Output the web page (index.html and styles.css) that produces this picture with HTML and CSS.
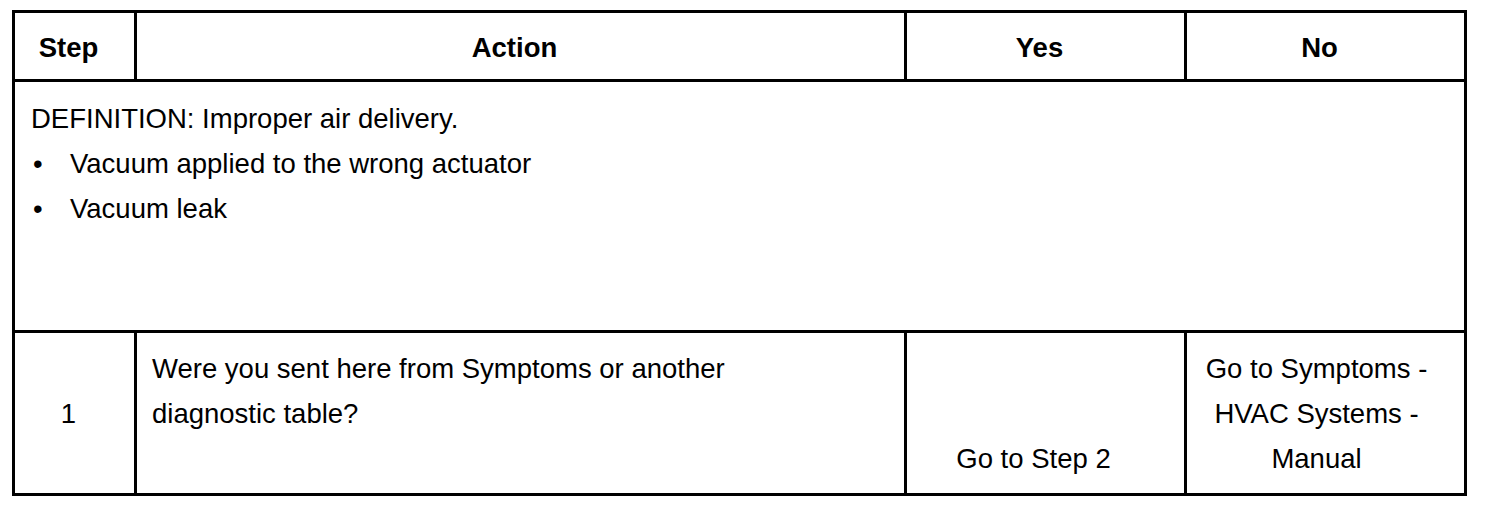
FILE: index.html
```html
<!DOCTYPE html>
<html lang="en">
<head>
<meta charset="utf-8">
<title>Improper air delivery</title>
<link rel="stylesheet" href="styles.css">
</head>
<body>
<div class="diag-table">
  <div class="cell head">Step</div>
  <div class="cell head">Action</div>
  <div class="cell head">Yes</div>
  <div class="cell head">No</div>

  <div class="cell definition">
    <p class="def-title">DEFINITION: Improper air delivery.</p>
    <ul class="bullets">
      <li><span class="dot">•</span><span>Vacuum applied to the wrong actuator</span></li>
      <li><span class="dot">•</span><span>Vacuum leak</span></li>
    </ul>
  </div>

  <div class="cell step">1</div>
  <div class="cell action">Were you sent here from Symptoms or another<br>diagnostic table?</div>
  <div class="cell yes">Go to Step 2</div>
  <div class="cell no">Go to Symptoms -<br>HVAC Systems -<br>Manual</div>
</div>
</body>
</html>
```

FILE: styles.css
```css
html, body {
  margin: 0;
  padding: 0;
  background: #fff;
}

body {
  font-family: "Liberation Sans", Arial, sans-serif;
  font-size: 27.5px;
  line-height: 45px;
  color: #000;
}

.diag-table {
  display: grid;
  grid-template-columns: 119px 767px 277px 277px;
  grid-template-rows: 66px 248px 160px;
  gap: 3px;
  padding: 3px;
  background: #000;
  width: max-content;
  margin: 10px 0 0 12px;
}

.cell {
  background: #fff;
  box-sizing: border-box;
}

.head {
  display: flex;
  align-items: center;
  justify-content: center;
  font-weight: bold;
  padding: 2px 12px 0 0;
}

.definition {
  grid-column: 1 / -1;
  padding: 14px 16px 0 16px;
}

.def-title {
  margin: 0;
}

.bullets {
  list-style: none;
  margin: 0;
  padding: 0;
}

.bullets li {
  display: flex;
}

.dot {
  width: 39px;
  padding-left: 2px;
  box-sizing: border-box;
}

.step {
  display: flex;
  align-items: center;
  justify-content: center;
  padding-right: 12px;
}

.action {
  padding: 13px 15px 0 15px;
}

.yes {
  display: flex;
  align-items: flex-end;
  justify-content: center;
  padding: 0 24px 12px 0;
}

.no {
  display: flex;
  align-items: center;
  justify-content: center;
  text-align: center;
  padding: 0 18px 0 0;
}
```
